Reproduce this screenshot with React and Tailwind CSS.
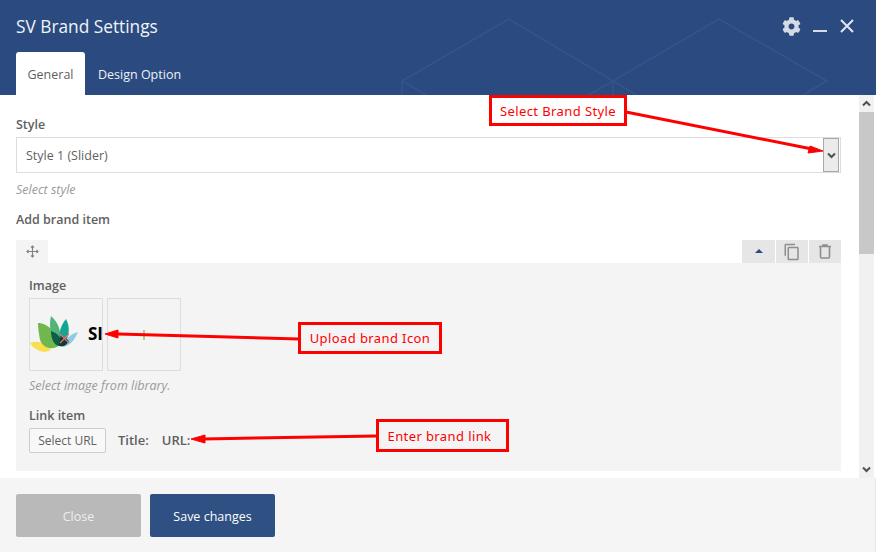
import React from "react";
import { FaCog } from "react-icons/fa";
import { MdContentCopy } from "react-icons/md";

const RED = "#ff0000";

const Label = ({ children, className = "" }) => (
  <p className={`h-[18px] pt-px text-[12.5px] font-semibold leading-[18px] text-[#5f5f5f] ${className}`}>{children}</p>
);

const Help = ({ children, className = "" }) => (
  <p className={`h-[16px] text-[12.5px] italic leading-[16px] text-[#9a9a9a] ${className}`}>{children}</p>
);

const Callout = ({ className, children }) => (
  <div className={`absolute flex items-center justify-center border-[3px] border-[#ff0000] pt-[2px] text-[13px] tracking-[0.4px] text-[#ff0000] [font-family:'Noto_Sans',sans-serif] ${className}`}>
    {children}
  </div>
);

const Chevron = ({ up }) => (
  <svg width="9" height="7" viewBox="0 0 9 7" className="block">
    <path d={up ? "M1 5.5L4.5 2L8 5.5" : "M1 1.5L4.5 5L8 1.5"} fill="none" stroke="#505050" strokeWidth="2" />
  </svg>
);

const App = () => {
  return (
    <div className="relative flex h-[552px] w-[876px] flex-col overflow-hidden bg-white [font-family:'Open_Sans',sans-serif]">
      {/* Header */}
      <header className="relative h-[95px] shrink-0 bg-[#2b4b80] px-4">
        <svg className="absolute inset-0" width="876" height="95" fill="none" stroke="#34548a" strokeWidth="1.5">
          <path d="M402 95V81L509 19L613 81L719 19L827 81L760 120" />
          <path d="M402 81L430 97M613 81V95M613 81L585 97M613 81L640 97" />
        </svg>
        <div className="relative flex items-center justify-between pt-[14px]">
          <h1 className="h-[24px] pt-px text-[17.3px] font-normal leading-[24px] text-[#f2f4f8]">SV Brand Settings</h1>
          <div className="mr-[6px] flex items-center text-[#d5dbe6]">
            <FaCog className="text-[19px]" />
            <span className="ml-[12px] mt-[10px] h-[2px] w-[14px] bg-[#d5dbe6]" />
            <svg width="14" height="14" viewBox="0 0 14 14" className="ml-[13px]">
              <path d="M1 1L13 13M13 1L1 13" stroke="#e2e6ee" strokeWidth="2" />
            </svg>
          </div>
        </div>
        <div className="relative mt-[14px] flex text-[12.5px] leading-[18px]">
          <div className="flex h-[43px] w-[69px] items-center justify-center rounded-t-[3px] bg-white pt-[2px] text-[#5f5f5f]">General</div>
          <div className="flex h-[43px] items-center pl-[13px] pt-[2px] text-[#eef1f6]">Design Option</div>
        </div>
      </header>

      {/* Body */}
      <main className="flex h-[383px] shrink-0">
        <div className="w-[859px] shrink-0 pl-4 pr-[18px] pt-[20px]">
          <Label>Style</Label>
          <div className="mt-[4px] flex h-[36px] items-center justify-between border border-[#dddddd] pl-[9px] pr-px text-[12.5px] text-[#5f5f5f]">
            <span className="pt-[2px]">Style 1 (Slider)</span>
            <span className="flex h-[34px] w-[16px] items-center justify-center border border-[#a8a8a8] bg-[#ebebeb]">
              <Chevron />
            </span>
          </div>
          <Help className="mt-[9px]">Select style</Help>
          <Label className="mt-[12px]">Add brand item</Label>

          <div className="mt-[12px] flex h-[23px] items-stretch justify-between">
            <div className="flex w-[32px] items-center justify-center bg-[#f4f4f4]">
              <svg width="13" height="13" viewBox="0 0 13 13" fill="none" stroke="#80838a" strokeWidth="1.2">
                <path d="M6.5 1V12M1 6.5H12" />
                <path d="M5 2.5L6.5 1L8 2.5M5 10.5L6.5 12L8 10.5M2.5 5L1 6.5L2.5 8M10.5 5L12 6.5L10.5 8" />
              </svg>
            </div>
            <div className="flex gap-px">
              <div className="flex w-[33px] items-center justify-center bg-[#e6e6e6]">
                <span className="-mt-px h-0 w-0 border-x-[4px] border-b-[4px] border-x-transparent border-b-[#2b4b80]" />
              </div>
              <div className="flex w-[32px] items-center justify-center bg-[#e6e6e6] text-[#8e8e8e]">
                <MdContentCopy className="text-[18px]" />
              </div>
              <div className="flex w-[32px] items-center justify-center bg-[#e6e6e6]">
                <svg width="14" height="15" viewBox="0 0 14 15" fill="none" stroke="#8e8e8e" strokeWidth="1.6">
                  <path d="M1 2.5H13M5 2.5V1H9V2.5" />
                  <path d="M2.5 3V13C2.5 13.6 3 14 3.5 14H10.5C11 14 11.5 13.6 11.5 13V3" />
                </svg>
              </div>
            </div>
          </div>

          <section className="h-[208px] bg-[#f4f4f4] px-[13px] pt-[13px]">
            <Label>Image</Label>
            <div className="mt-[4px] flex gap-[4px]">
              <div className="relative h-[73px] w-[74px] overflow-hidden border border-[#dddddd]">
                <svg width="50" height="37" viewBox="0 0 50 37" className="absolute left-0 top-[17px]">
                  <path d="M0 27C8 24 14 27 18 31C24 33 18 36 14 36C8 35 3 32 0 27Z" fill="#f7df4f" />
                  <path d="M8 7C18 7 27 17 30 29C22 35 13 32 10 24C9 18 8 13 8 7Z" fill="#70b84e" />
                  <path d="M21 0C29 7 32 16 29 28C22 25 18 13 21 0Z" fill="#52b578" />
                  <path d="M36 3C41 12 39 23 32 31C27 24 29 11 36 3Z" fill="#14a693" />
                  <path d="M48 16C44 25 40 30 32 31C34 25 40 18 48 16Z" fill="#8fcbe6" />
                  <path d="M21 15C28 17 33 23 31 30C25 31 21 24 21 15Z" fill="#0f5d47" />
                  <path d="M31 19C34 21 37 23 39 25C36 30 33 31 29 30C29 27 30 23 31 19Z" fill="#0c3c34" />
                  <path d="M30 18L39 27M39 18L30 27" stroke="#f26d6d" strokeWidth="1.3" />
                </svg>
                <span className="absolute left-[58px] top-[24px] text-[17px] font-bold leading-[22px] text-black">SI</span>
              </div>
              <div className="flex h-[73px] w-[74px] items-center justify-center border border-[#dddddd]">
                <span className="h-[10px] w-[2px] bg-[#a9d37a]" />
              </div>
            </div>
            <Help className="mt-[6px] pt-px">Select image from library.</Help>
            <Label className="mt-[13px]">Link item</Label>
            <div className="mt-[4px] flex items-center text-[13px]">
              <button className="flex h-[25px] w-[77px] items-center justify-center rounded-[2px] border border-[#cccccc] bg-[#f8f8f8] text-[12px] text-[#5f5f5f]">Select URL</button>
              <span className="ml-[12px] font-semibold text-[#5f5f5f]">Title:</span>
              <span className="ml-[13px] font-semibold text-[#5f5f5f]">URL:</span>
            </div>
          </section>
        </div>

        {/* Scrollbar */}
        <div className="flex w-[15px] shrink-0 flex-col bg-[#f1f1f1]">
          <div className="flex h-[17px] items-center justify-center"><Chevron up /></div>
          <div className="h-[142px] bg-[#c8c8c8]" />
          <div className="flex-1" />
          <div className="flex h-[17px] items-center justify-center"><Chevron /></div>
        </div>
      </main>

      {/* Footer */}
      <footer className="flex flex-1 gap-[9px] border-r border-[#e4e4e4] bg-[#f5f5f5] px-4 pt-[16px]">
        <button className="h-[43px] w-[125px] rounded-[2px] bg-[#b9b9b9] pt-[4px] text-[12.5px] text-[#eeeeee]">Close</button>
        <button className="h-[43px] w-[125px] rounded-[2px] bg-[#2f5083] pt-[4px] text-[12.5px] text-white">Save changes</button>
      </footer>

      {/* Annotations */}
      <svg className="absolute inset-0" width="876" height="552" fill="none">
        <path d="M626 112L812 149" stroke={RED} strokeWidth="3" />
        <path d="M823 151L808 153L810 146Z" fill={RED} stroke={RED} />
        <path d="M299 339L118 334" stroke={RED} strokeWidth="3" />
        <path d="M105 334L118 330V338Z" fill={RED} stroke={RED} />
        <path d="M377 436L203 439" stroke={RED} strokeWidth="3" />
        <path d="M191 439L205 435V443Z" fill={RED} stroke={RED} />
      </svg>
      <Callout className="left-[489px] top-[95px] h-[31px] w-[138px] bg-white">Select Brand Style</Callout>
      <Callout className="left-[298px] top-[322px] h-[32px] w-[144px] bg-[#f4f4f4]">Upload brand Icon</Callout>
      <Callout className="left-[376px] top-[419px] h-[33px] w-[133px] bg-[#f4f4f4] pr-[6px]">Enter brand link</Callout>
    </div>
  );
};

export default App;
